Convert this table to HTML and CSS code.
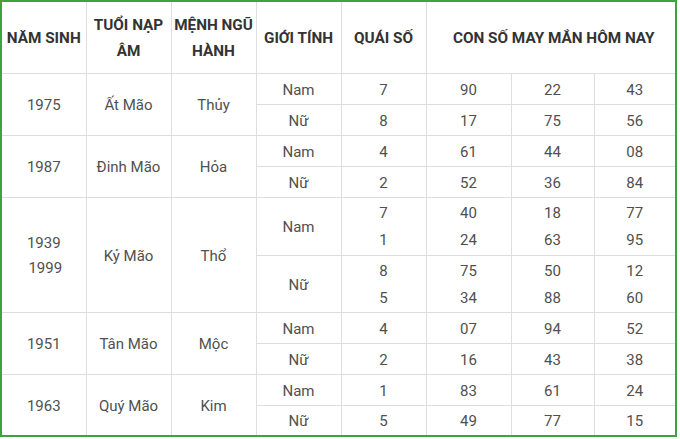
FILE: index.html
```html
<!DOCTYPE html>
<html lang="vi">
<head>
<meta charset="utf-8">
<title>Con số may mắn</title>
<link rel="stylesheet" href="styles.css">
</head>
<body>
<table class="lucky">
  <colgroup>
    <col class="c1"><col class="c2"><col class="c3"><col class="c4"><col class="c5"><col class="c6"><col class="c7"><col class="c8">
  </colgroup>
  <thead>
    <tr class="head">
      <th>NĂM SINH</th>
      <th>TUỔI NẠP<br>ÂM</th>
      <th>MỆNH NGŨ<br>HÀNH</th>
      <th>GIỚI TÍNH</th>
      <th>QUÁI SỐ</th>
      <th colspan="3" class="wide">CON SỐ MAY MẮN HÔM NAY</th>
    </tr>
  </thead>
  <tbody>
    <tr class="r">
      <td rowspan="2">1975</td><td rowspan="2">Ất Mão</td><td rowspan="2">Thủy</td>
      <td>Nam</td><td>7</td><td>90</td><td>22</td><td>43</td>
    </tr>
    <tr class="r">
      <td>Nữ</td><td>8</td><td>17</td><td>75</td><td>56</td>
    </tr>
    <tr class="r">
      <td rowspan="2">1987</td><td rowspan="2">Đinh Mão</td><td rowspan="2">Hỏa</td>
      <td>Nam</td><td>4</td><td>61</td><td>44</td><td>08</td>
    </tr>
    <tr class="r">
      <td>Nữ</td><td>2</td><td>52</td><td>36</td><td>84</td>
    </tr>
    <tr class="tall">
      <td rowspan="2" class="years">1939<br><span class="shift">1999</span></td><td rowspan="2">Kỷ Mão</td><td rowspan="2">Thổ</td>
      <td>Nam</td><td class="multi">7<br>1</td><td class="multi">40<br>24</td><td class="multi">18<br>63</td><td class="multi">77<br>95</td>
    </tr>
    <tr class="tall2">
      <td>Nữ</td><td class="multi">8<br>5</td><td class="multi">75<br>34</td><td class="multi">50<br>88</td><td class="multi">12<br>60</td>
    </tr>
    <tr class="r">
      <td rowspan="2">1951</td><td rowspan="2">Tân Mão</td><td rowspan="2">Mộc</td>
      <td>Nam</td><td>4</td><td>07</td><td>94</td><td>52</td>
    </tr>
    <tr class="r">
      <td>Nữ</td><td>2</td><td>16</td><td>43</td><td>38</td>
    </tr>
    <tr class="r">
      <td rowspan="2">1963</td><td rowspan="2">Quý Mão</td><td rowspan="2">Kim</td>
      <td>Nam</td><td>1</td><td>83</td><td>61</td><td>24</td>
    </tr>
    <tr class="r">
      <td>Nữ</td><td>5</td><td>49</td><td>77</td><td>15</td>
    </tr>
  </tbody>
</table>
</body>
</html>
```
FILE: styles.css
```css
html, body {
  margin: 0;
  padding: 0;
  background: #ffffff;
}
.lucky {
  border-collapse: collapse;
  table-layout: fixed;
  width: 677px;
  border: 2px solid #3aa53a;
  font-family: Roboto, "Liberation Sans", Arial, sans-serif;
  font-size: 15px;
  color: #505050;
}
.c1 { width: 85px; }
.c2 { width: 85px; }
.c3 { width: 85px; }
.c4 { width: 85px; }
.c5 { width: 85px; }
.c6 { width: 85px; }
.c7 { width: 83px; }
.c8 { width: 82px; }
.lucky th, .lucky td {
  border: 1px solid #dedede;
  padding: 2px 0 0 0;
  text-align: center;
  vertical-align: middle;
}
.lucky th {
  font-weight: 700;
  font-size: 15.3px;
  color: #333333;
  line-height: 26px;
}
.lucky .wide { padding-left: 6px; }
.head { height: 72px; }
.r { height: 31px; }
.r td { line-height: 20px; }
.tall { height: 58px; }
.tall2 { height: 57px; }
.multi { line-height: 27px; }
.years { line-height: 25px; }
.shift { padding-left: 3px; }
```
